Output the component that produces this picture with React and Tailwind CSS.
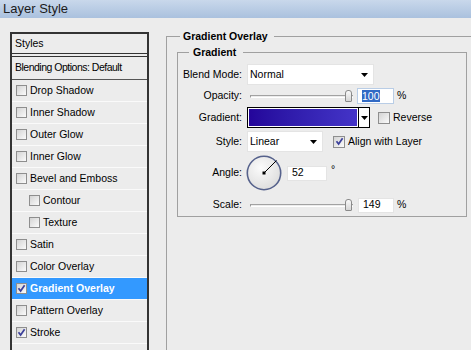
import React from 'react';

const FONT = "font-['Liberation_Sans',Arial,sans-serif]";

const Arrow = () => (
  <svg width="7" height="4" viewBox="0 0 7 4">
    <path d="M0 0h7L3.5 4z" fill="#000" />
  </svg>
);

const Check = ({ checked, size = 'small' }) => (
  <span
    className={`flex shrink-0 items-center justify-center border border-[#8e8e8e] bg-linear-to-br from-[#d4d4d4] to-[#fbfbfb] ${
      size === 'small' ? 'h-[11px] w-[11px]' : 'h-[12px] w-[12px]'
    }`}
  >
    {checked && (
      <svg width="9" height="9" viewBox="0 0 9 9">
        <path d="M1.5 4.2 L3.6 7 L7.6 1.2" stroke="#3b3f9a" strokeWidth="1.7" fill="none" />
      </svg>
    )}
  </span>
);

const styleItems = [
  { label: 'Drop Shadow' },
  { label: 'Inner Shadow' },
  { label: 'Outer Glow' },
  { label: 'Inner Glow' },
  { label: 'Bevel and Emboss' },
  { label: 'Contour', sub: true },
  { label: 'Texture', sub: true },
  { label: 'Satin' },
  { label: 'Color Overlay' },
  { label: 'Gradient Overlay', checked: true, selected: true },
  { label: 'Pattern Overlay' },
  { label: 'Stroke', checked: true },
];

const Slider = ({ thumbAt = 98 }) => (
  <div className="relative flex h-[14px] w-[106px] items-center pl-[3px]">
    <div className="h-[3px] flex-1 border-l border-t border-b border-l-[#9a9a9a] border-t-[#a2a2a2] border-b-white" />
    <div
      className="absolute top-[1px] h-[12px] w-[7px] rounded-t-[3px] rounded-b-[1px] border border-[#8a8a8a] bg-linear-to-b from-[#fafafa] to-[#d6d6d6]"
      style={{ left: thumbAt }}
    />
  </div>
);

const Row = ({ label, className = '', children }) => (
  <div className={`flex items-center ${className}`}>
    <div className="w-[64px] shrink-0 text-right">{label}</div>
    <div className="ml-[5px] flex items-center">{children}</div>
  </div>
);

export default function App() {
  return (
    <div className={`flex h-[350px] w-[471px] flex-col overflow-hidden bg-[#ececec] text-[10.5px] text-black ${FONT}`}>
      {/* title bar */}
      <div className="flex h-[18px] shrink-0 items-center bg-linear-to-b from-[#c9d8eb] to-[#aac1de] pl-[3px] text-[13px] text-[#1b1b1b]">
        Layer Style
      </div>

      <div className="flex flex-1">
        {/* styles list */}
        <div className="ml-[10px] mt-[14px] flex w-[139px] shrink-0 flex-col border-2 border-b-0 border-[#333]">
          <div className="flex h-[20px] items-center border-b border-[#333] pl-[3px]">Styles</div>
          <div className="h-[2px]" />
          <div className="flex h-[24px] items-center whitespace-nowrap border-y border-t-[#333] border-b-[#555] pl-[3px] tracking-[-0.5px]">
            Blending Options: Default
          </div>
          {styleItems.map((item) => (
            <div
              key={item.label}
              className={`flex h-[22px] items-center gap-[3px] border-b border-[#fafafa] ${
                item.sub ? 'pl-[17px]' : 'pl-[4px]'
              } ${item.selected ? 'bg-[#3399ff] font-bold text-white' : ''}`}
            >
              <Check checked={item.checked} />
              <span>{item.label}</span>
            </div>
          ))}
        </div>

        {/* gradient overlay group */}
        <fieldset className="ml-[17px] mt-[12px] h-[340px] w-[320px] shrink-0 border border-[#a0a0a0] p-0">
          <legend className="ml-[13px] pl-[3px] pr-[6px] text-[10.5px] font-bold leading-[12px]">Gradient Overlay</legend>
          <div className="pl-[10px]">
            <fieldset className="mt-[4px] w-[290px] border border-[#a0a0a0] p-0">
              <legend className="ml-[11px] pl-[4px] pr-[7px] font-bold leading-[12px]">Gradient</legend>
              <div className="flex flex-col pb-[3px] pt-[6px]">
                <Row label="Blend Mode:" className="h-[21px]">
                  <div className="flex h-[21px] w-[127px] items-center justify-between border border-[#e4e4e4] bg-white pl-[2px] pr-[5px]">
                    <span>Normal</span>
                    <Arrow />
                  </div>
                </Row>

                <Row label="Opacity:" className="mt-[3px] h-[16px]">
                  <Slider />
                  <div className="ml-[4px] flex h-[16px] w-[37px] items-center border border-[#b9cde6] bg-white pl-[4px]">
                    <span className="bg-[#316ac5] leading-[12px] text-white">100</span>
                  </div>
                  <span className="ml-[3px]">%</span>
                </Row>

                <Row label="Gradient:" className="mt-[3px] h-[21px]">
                  <div className="flex h-[21px] w-[123px] border border-black bg-white">
                    <div className="m-px flex-1 bg-linear-to-r from-[#24059a] to-[#4434c8]" />
                    <div className="flex w-[11px] items-center justify-center border-l border-black">
                      <Arrow />
                    </div>
                  </div>
                  <span className="ml-[8px]">
                    <Check size="big" />
                  </span>
                  <span className="ml-[3px]">Reverse</span>
                </Row>

                <Row label="Style:" className="mt-[3px] h-[21px]">
                  <div className="flex h-[21px] w-[76px] items-center justify-between border border-[#e4e4e4] bg-white pl-[2px] pr-[5px]">
                    <span>Linear</span>
                    <Arrow />
                  </div>
                  <span className="ml-[10px]">
                    <Check size="big" checked />
                  </span>
                  <span className="ml-[3px]">Align with Layer</span>
                </Row>

                <Row label="Angle:" className="mt-[3px] h-[36px]">
                  <svg className="-ml-[1px]" width="36" height="36" viewBox="0 0 36 36">
                    <defs>
                      <radialGradient id="dial" cx="40%" cy="35%" r="70%">
                        <stop offset="0" stopColor="#fbfbfb" />
                        <stop offset="1" stopColor="#dcdcdc" />
                      </radialGradient>
                    </defs>
                    <circle cx="18" cy="18" r="16.7" fill="url(#dial)" stroke="#56628c" strokeWidth="1.6" />
                    <line x1="18" y1="18" x2="30.5" y2="5.5" stroke="#000" strokeWidth="1" />
                    <rect x="16.5" y="16.5" width="3" height="3" fill="#000" />
                  </svg>
                  <div className="ml-[5px] flex h-[15px] w-[40px] items-center border border-[#e4e4e4] bg-white pl-[4px]">52</div>
                  <span className="mb-[6px] ml-[4px]">°</span>
                </Row>

                <Row label="Scale:" className="mt-[6px] h-[16px]">
                  <Slider />
                  <div className="ml-[5px] flex h-[15px] w-[36px] items-center border border-[#e4e4e4] bg-white pl-[4px]">149</div>
                  <span className="ml-[3px]">%</span>
                </Row>
              </div>
            </fieldset>
          </div>
        </fieldset>
      </div>
    </div>
  );
}
